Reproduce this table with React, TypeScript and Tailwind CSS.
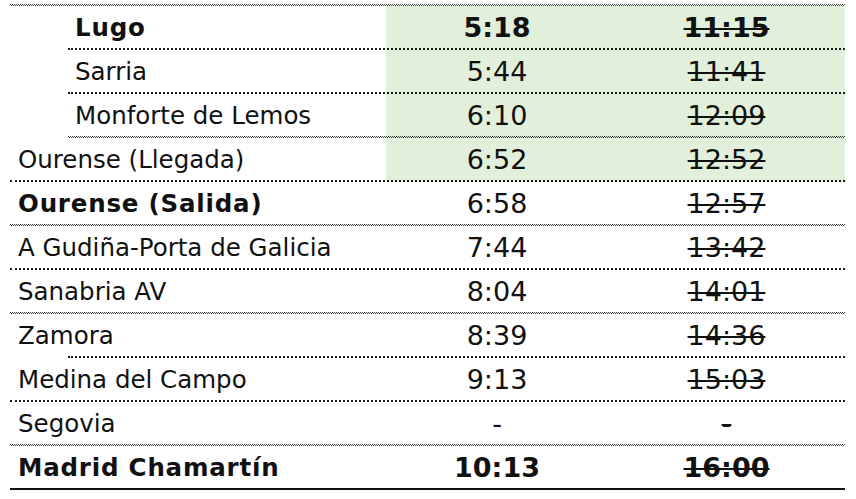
import React from 'react'

type Line = 'dot' | 'wave' | 'solid'

type Stop = {
  name: string
  time: string
  old: string
  bold?: boolean
  boldTime?: boolean
  indent?: boolean
  green?: boolean
  line: Line
  lineIndent?: boolean
}

const stops: Stop[] = [
  { name: 'Lugo', time: '5:18', old: '11:15', bold: true, boldTime: true, indent: true, green: true, line: 'dot', lineIndent: true },
  { name: 'Sarria', time: '5:44', old: '11:41', indent: true, green: true, line: 'dot', lineIndent: true },
  { name: 'Monforte de Lemos', time: '6:10', old: '12:09', indent: true, green: true, line: 'wave', lineIndent: true },
  { name: 'Ourense (Llegada)', time: '6:52', old: '12:52', green: true, line: 'dot' },
  { name: 'Ourense (Salida)', time: '6:58', old: '12:57', bold: true, line: 'wave' },
  { name: 'A Gudiña-Porta de Galicia', time: '7:44', old: '13:42', line: 'dot' },
  { name: 'Sanabria AV', time: '8:04', old: '14:01', line: 'wave' },
  { name: 'Zamora', time: '8:39', old: '14:36', line: 'dot', lineIndent: true },
  { name: 'Medina del Campo', time: '9:13', old: '15:03', line: 'dot' },
  { name: 'Segovia', time: '-', old: '-', line: 'wave' },
  { name: 'Madrid Chamartín', time: '10:13', old: '16:00', bold: true, boldTime: true, line: 'solid' },
]

function Rule({ kind }: { kind: Line }) {
  if (kind === 'dot') return <div className="h-[2px] flex-1 border-t-2 border-dotted border-[#1a1a1a]" />
  if (kind === 'solid') return <div className="h-[2px] flex-1 bg-[#111]" />
  // the fine hairline pattern, drawn as a two row checker
  return (
    <div className="h-[2px] flex-1 bg-[linear-gradient(90deg,#3a3a3a_50%,transparent_50%),linear-gradient(90deg,transparent_50%,#3a3a3a_50%)] bg-[length:2px_1px] bg-[position:0_0,0_1px] bg-repeat-x" />
  )
}

function Row({ stop }: { stop: Stop }) {
  const green = stop.green ? 'bg-[#e2efda]' : ''
  return (
    <div>
      <div className="flex h-[42px]">
        <div
          className={`flex w-[376px] items-center pt-[3px] text-[24.5px] ${
            stop.indent ? 'pl-[65px]' : 'pl-[8px]'
          } ${stop.bold ? 'font-bold tracking-[0.8px]' : ''}`}
        >
          {stop.name}
        </div>
        <div
          className={`flex w-[222px] items-center justify-center pt-[3px] text-[27px] ${green} ${
            stop.boldTime ? 'font-bold' : ''
          }`}
        >
          {stop.time}
        </div>
        <div
          className={`flex w-[237px] items-center justify-center pt-[3px] text-[27px] ${green} ${
            stop.boldTime ? 'font-bold' : ''
          }`}
        >
          <span className="line-through decoration-2">{stop.old}</span>
        </div>
      </div>
      <div
        className={`flex h-[2px] ${
          stop.green ? 'bg-[linear-gradient(90deg,transparent_376px,#e2efda_376px)]' : ''
        }`}
      >
        {stop.lineIndent && <div className="w-[58px]" />}
        <Rule kind={stop.line} />
      </div>
    </div>
  )
}

export default function App() {
  return (
    <div className="h-[499px] w-[856px] overflow-hidden bg-white pt-[4px] text-[#111] font-['DejaVu_Sans',sans-serif]">
      <div className="ml-[10px] w-[835px]">
        <div className="flex h-[2px]">
          <Rule kind="wave" />
        </div>
        {stops.map((s) => (
          <Row key={s.name} stop={s} />
        ))}
      </div>
    </div>
  )
}
